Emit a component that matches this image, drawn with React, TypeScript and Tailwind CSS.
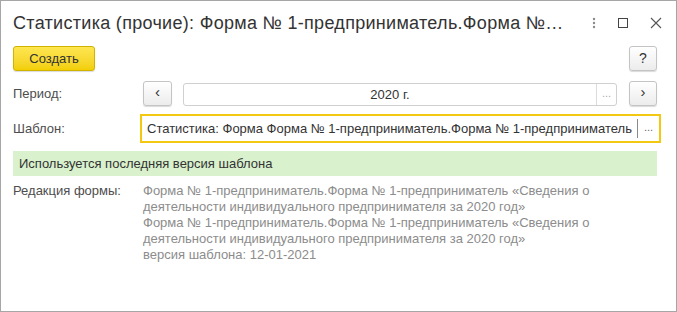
import React from 'react';

const font = { fontFamily: '"Liberation Sans", Arial, sans-serif' };

const GrayButton: React.FC<{ children: React.ReactNode; className?: string }> = ({ children, className = '' }) => (
  <div
    className={`flex items-center justify-center h-[25px] rounded-[3px] border border-[#c4c4c4] bg-gradient-to-b from-white to-[#ececec] shadow-[0_1px_1px_rgba(0,0,0,0.15)] text-[#333] text-[13px] ${className}`}
  >
    {children}
  </div>
);

const App: React.FC = () => {
  return (
    <div className="w-[677px] h-[312px] bg-white border border-[#a6a6a6] flex flex-col text-[13px] text-[#4d4d4d]" style={font}>
      {/* Title bar */}
      <div className="h-[44px] flex items-center pl-[12px] pr-[14px]">
        <div className="flex-1 text-[18px] tracking-[0.3px] text-[#333] whitespace-nowrap overflow-hidden">
          Статистика (прочие): Форма № 1-предприниматель.Форма №…
        </div>
        <div className="flex items-center gap-[22px]">
          <svg width="4" height="12" viewBox="0 0 4 12">
            <circle cx="2" cy="2" r="1.2" fill="#8a8a8a" />
            <circle cx="2" cy="6" r="1.2" fill="#8a8a8a" />
            <circle cx="2" cy="10" r="1.2" fill="#8a8a8a" />
          </svg>
          <svg width="10" height="10" viewBox="0 0 10 10">
            <rect x="0.5" y="0.5" width="9" height="9" fill="none" stroke="#444" strokeWidth="1" />
          </svg>
          <svg width="12" height="12" viewBox="0 0 12 12">
            <path d="M1 1L11 11M11 1L1 11" stroke="#555" strokeWidth="1.1" fill="none" />
          </svg>
        </div>
      </div>

      {/* Command bar */}
      <div className="mt-[1px] flex items-center pl-[12px] pr-[19px]">
        <div className="flex items-center justify-center w-[82px] h-[25px] rounded-[3px] border border-[#d1b200] bg-gradient-to-b from-[#ffe64f] to-[#f2cf00] shadow-[0_1px_1px_rgba(0,0,0,0.15)] text-[#333] text-[13px]">
          Создать
        </div>
        <div className="flex-1" />
        <GrayButton className="w-[28px] text-[14px]">?</GrayButton>
      </div>

      {/* Period */}
      <div className="mt-[10px] flex items-center pl-[12px] pr-[19px] h-[25px]">
        <div className="w-[130px]">Период:</div>
        <GrayButton className="w-[29px] text-[15px] pb-[2px]">‹</GrayButton>
        <div className="ml-[11px] flex-1 flex h-[23px] mt-[2px] rounded-[3px] border border-[#d0d0d0] bg-white">
          <div className="flex-1 flex items-center justify-center text-[#333]">2020 г.</div>
          <div className="w-[20px] border-l border-[#dcdcdc] flex items-center justify-center text-[#aaa] text-[11px] pb-[2px]">...</div>
        </div>
        <GrayButton className="ml-[12px] w-[28px] text-[15px] pb-[2px]">›</GrayButton>
      </div>

      {/* Template */}
      <div className="mt-[8px] flex items-center pl-[12px] pr-[15px] h-[29px]">
        <div className="w-[127px]">Шаблон:</div>
        <div className="flex-1 flex h-[29px] border-2 border-[#f2c811] bg-white">
          <div className="flex-1 flex items-center pl-[5px] text-[#333] whitespace-nowrap overflow-hidden">
            Статистика: Форма Форма № 1-предприниматель.Форма № 1-предприниматель
          </div>
          <div className="w-[22px] my-[3px] border-l border-[#8a8a8a] flex items-center justify-center text-[#666] text-[11px] pb-[2px]">...</div>
        </div>
      </div>

      {/* Status */}
      <div className="mt-[8px] mx-[12px] mr-[19px] h-[25px] bg-[#d9f1cd] flex items-center pl-[6px] text-[#333]">
        Используется последняя версия шаблона
      </div>

      {/* Form edition */}
      <div className="mt-[7px] flex pl-[12px] leading-[16px]">
        <div className="w-[130px]">Редакция формы:</div>
        <div className="w-[514px] text-[#8c8c8c]">
          <div>Форма № 1-предприниматель.Форма № 1-предприниматель «Сведения о деятельности индивидуального предпринимателя за 2020 год»</div>
          <div>Форма № 1-предприниматель.Форма № 1-предприниматель «Сведения о деятельности индивидуального предпринимателя за 2020 год»</div>
          <div>версия шаблона: 12-01-2021</div>
        </div>
      </div>
    </div>
  );
};

export default App;
